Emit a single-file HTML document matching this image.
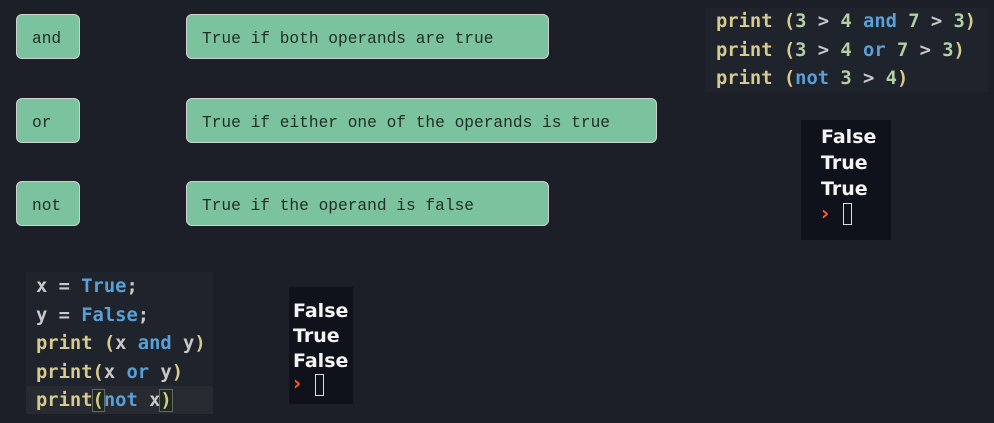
<!DOCTYPE html>
<html><head><meta charset="utf-8"><style>
body{margin:0;width:994px;height:423px;background:#1c1f27;position:relative;overflow:hidden}
.b{position:absolute;box-sizing:border-box;background:#7bc29e;border:1.5px solid #d0d0d0;border-radius:6px;font-family:"Liberation Mono","Courier New",monospace;font-size:16.2px;color:#1f2e26;line-height:48px;padding-left:15px;height:45px}
.code{position:absolute;background:#1f232c;font-family:"DejaVu Sans Mono",monospace;font-size:18.8px;font-weight:bold;color:#d8d0a0}
.code div{position:absolute;left:0;white-space:pre;padding-left:10px}
.p{color:#d6ca8e}.n{color:#b3d0a4}.k{color:#5aa0d8}.w{color:#c8c8c8}
.t{position:absolute;background:#0f121a;font-family:"DejaVu Sans",sans-serif;font-size:19px;font-weight:bold;color:#f4f4f4}
.t div{position:absolute;white-space:pre}
.cur{position:absolute;width:9px;height:22px;border:1.5px solid #ddd;box-sizing:border-box}
.ar{position:absolute;color:#ff5a1f;font-size:20px;font-weight:bold}
</style></head><body>
<div class="b" style="left:16px;top:14px;width:64px">and</div>
<div class="b" style="left:186px;top:14px;width:363px">True if both operands are true</div>
<div class="b" style="left:16px;top:98px;width:64px">or</div>
<div class="b" style="left:186px;top:98px;width:471px">True if either one of the operands is true</div>
<div class="b" style="left:16px;top:181px;width:64px">not</div>
<div class="b" style="left:186px;top:181px;width:363px">True if the operand is false</div>

<div class="code" style="left:705px;top:8px;width:283px;height:84px">
<div style="top:3px;left:1px"><span class="p">print (</span><span class="n">3</span><span class="w"> &gt; </span><span class="n">4</span> <span class="k">and</span> <span class="n">7</span><span class="w"> &gt; </span><span class="n">3</span><span class="p">)</span></div>
<div style="top:32px;left:1px"><span class="p">print (</span><span class="n">3</span><span class="w"> &gt; </span><span class="n">4</span> <span class="k">or</span> <span class="n">7</span><span class="w"> &gt; </span><span class="n">3</span><span class="p">)</span></div>
<div style="top:60px;left:1px"><span class="p">print (</span><span class="k">not</span> <span class="n">3</span><span class="w"> &gt; </span><span class="n">4</span><span class="p">)</span></div>
</div>

<div class="t" style="left:801px;top:120px;width:90px;height:120px">
<div style="left:20px;top:6px">False</div>
<div style="left:20px;top:32px">True</div>
<div style="left:20px;top:58px">True</div>
<div class="ar" style="left:20px;top:81px">›</div>
<div class="cur" style="left:42px;top:83px"></div>
</div>

<div class="code" style="left:26px;top:272px;width:187px;height:142px">
<div style="top:114px;left:0;width:187px;height:28px;background:#272a30;padding:0"></div>
<div style="top:4px"><span class="w">x = </span><span class="k">True</span><span class="w">;</span></div>
<div style="top:33px"><span class="w">y = </span><span class="k">False</span><span class="w">;</span></div>
<div style="top:61px"><span class="p">print (</span><span class="w">x</span> <span class="k">and</span> <span class="w">y</span><span class="p">)</span></div>
<div style="top:90px"><span class="p">print(</span><span class="w">x</span> <span class="k">or</span> <span class="w">y</span><span class="p">)</span></div>
<div style="top:118px"><span class="p">print<span style="outline:1px solid #666;background:#1e2a20">(</span></span><span class="k">not</span> <span class="w">x</span><span class="p" style="outline:1px solid #666;background:#1e2a20">)</span></div>
</div>

<div class="t" style="left:289px;top:287px;width:64px;height:117px">
<div style="left:4px;top:13px">False</div>
<div style="left:4px;top:38px">True</div>
<div style="left:4px;top:63px">False</div>
<div class="ar" style="left:4px;top:84px">›</div>
<div class="cur" style="left:26px;top:87px"></div>
</div>
</body></html>
